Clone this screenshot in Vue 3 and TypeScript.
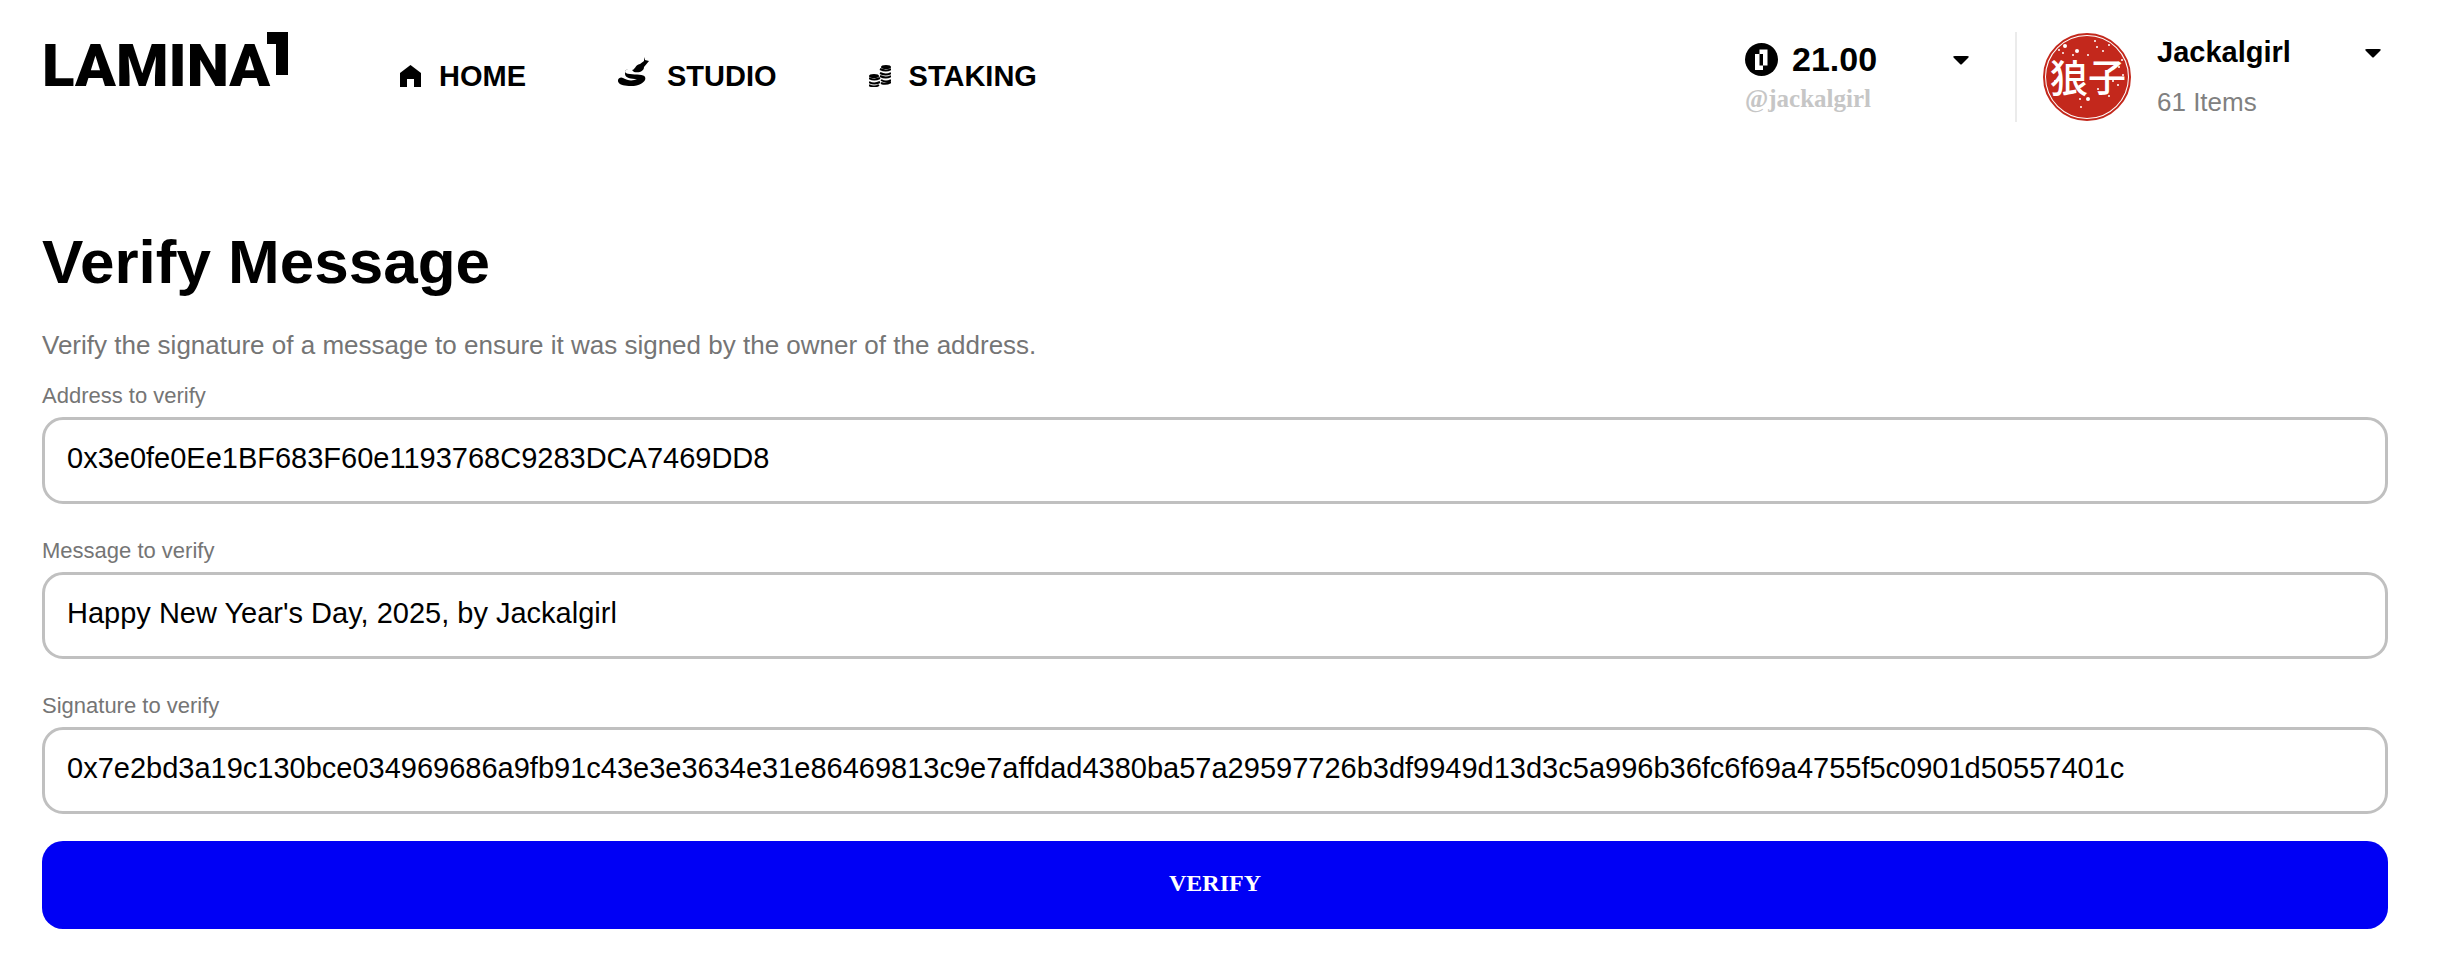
<script setup lang="ts">
import { ref } from 'vue'

interface Field {
  id: string
  label: string
  value: string
}

const fields = ref<Field[]>([
  { id: 'address', label: 'Address to verify', value: '0x3e0fe0Ee1BF683F60e1193768C9283DCA7469DD8' },
  { id: 'message', label: 'Message to verify', value: "Happy New Year's Day, 2025, by Jackalgirl" },
  {
    id: 'signature',
    label: 'Signature to verify',
    value:
      '0x7e2bd3a19c130bce034969686a9fb91c43e3e3634e31e86469813c9e7affdad4380ba57a29597726b3df9949d13d3c5a996b36fc6f69a4755f5c0901d50557401c',
  },
])

// Ink flecks of the seal: x, y, radius
const flecks: [number, number, number][] = [
  [16, 17, 1], [22, 13, 2], [30, 22, 1], [34, 18, 2], [45, 22, 1], [52, 8, 1], [54, 14, 1], [60, 18, 1],
  [66, 12, 1], [79, 27, 1], [76, 34, 1], [20, 20, 1], [12, 48, 1], [59, 46, 1], [37, 66, 1],
  [45, 66, 2], [55, 56, 1], [66, 63, 1], [75, 52, 1], [80, 42, 1], [38, 74, 1], [70, 48, 1],
]
</script>

<template>
  <div class="page">
    <header class="bar">
      <a class="logo" href="#" aria-label="Lamina1">
        <span class="word">LAMINA</span>
        <svg class="one" viewBox="0 0 21 43" aria-hidden="true"><path d="M0 0h21v43H9V12H0z" /></svg>
      </a>
      <nav class="nav">
        <a href="#">
          <svg width="21" height="22" viewBox="0 0 21 22" aria-hidden="true">
            <path d="M10.500 0 21 8v14h-7v-8H7v8H0V8z" />
          </svg>
          HOME
        </a>
        <a href="#">
          <svg class="brush" width="31" height="30" viewBox="0 0 31 30" aria-hidden="true">
            <path d="M26 0l1 3 4 1-5 6c0 4-4 6-10 5l-2-2c3 0 3-5 8-6l4-3z" />
            <path
              d="M10 12c-4 1-4 5 2 5 6 1 14 0 15 3 2 4-5 9-14 9-6 0-11-1-12-3-3-3 1-7 4-5 5 3 10 3 14 1-6 0-12-1-12-5 0-3 1-5 3-5z"
            />
          </svg>
          STUDIO
        </a>
        <a href="#">
          <svg width="22" height="22" viewBox="0 0 22 22" aria-hidden="true">
            <ellipse cx="5" cy="11" rx="5" ry="2" />
            <ellipse cx="17" cy="2" rx="5" ry="2" />
            <g fill="none" stroke="currentColor" stroke-width="2">
              <path d="M0 13q5 3 11 0M0 17q5 3 11 0M0 20q5 3 10 0" />
              <path d="M11 4q6 3 11 0M11 8q6 3 11 0M11 11q6 3 11 0M12 15q5 3 10 0M12 18q5 2 10-1" />
            </g>
          </svg>
          STAKING
        </a>
      </nav>

      <button class="wallet" type="button">
        <span class="funds">
          <span class="balance">
            <svg width="33" height="33" viewBox="0 0 66 66" aria-hidden="true">
              <circle cx="33" cy="33" r="33" />
              <path d="M20 22h16v32H20zM29 13h16v32H29z" fill="#fff" />
              <path d="M29 22h7v23h-7z" />
            </svg>
            21.00
          </span>
          <span class="handle">@jackalgirl</span>
        </span>
        <svg class="caret" viewBox="0 0 16 9" aria-hidden="true">
          <path d="M2 0h12q3 0 1 2L9 8q-1 1-2 0L1 2Q-1 0 2 0z" />
        </svg>
      </button>

      <button class="profile" type="button">
        <svg class="seal" viewBox="0 0 88 88" aria-hidden="true">
          <circle cx="44" cy="44" r="43" fill="none" stroke="#c3281c" stroke-width="2" />
          <circle cx="44" cy="44" r="41" fill="#c3281c" />
          <text x="7" y="59">狼</text>
          <text x="45" y="58">子</text>
          <circle v-for="([x, y, r], i) in flecks" :key="i" :cx="x" :cy="y" :r="r" fill="#fff" />
        </svg>
        <span class="who">
          <strong>Jackalgirl</strong>
          <span class="items">61 Items</span>
        </span>
        <svg class="caret" viewBox="0 0 16 9" aria-hidden="true">
          <path d="M2 0h12q3 0 1 2L9 8q-1 1-2 0L1 2Q-1 0 2 0z" />
        </svg>
      </button>
    </header>

    <main>
      <h1>Verify Message</h1>
      <p class="intro">Verify the signature of a message to ensure it was signed by the owner of the address.</p>
      <form @submit.prevent>
        <div v-for="field in fields" :key="field.id" class="field">
          <label :for="field.id">{{ field.label }}</label>
          <input :id="field.id" v-model="field.value" type="text" autocomplete="off" spellcheck="false" />
        </div>
        <button class="verify" type="submit">VERIFY</button>
      </form>
    </main>
  </div>
</template>

<style>
body {
  background: #fff;
}
</style>

<style scoped>
.page,
.page * {
  box-sizing: border-box;
}

.page {
  padding: 32px 62px 35px 42px;
  color: #000;
  font: 29px/40px 'Liberation Sans', Arial, sans-serif;
}

svg {
  display: block;
  flex: none;
  fill: currentColor;
}

a {
  color: inherit;
  text-decoration: none;
}

button {
  padding: 0;
  border: 0;
  background: none;
  color: inherit;
  font: inherit;
  text-align: left;
  cursor: pointer;
}

.bar {
  display: flex;
  align-items: flex-start;
  padding-right: 7px;
}

/* The numeral shares the wordmark's cell and hangs over its last letter */
.logo {
  display: grid;
  grid-template-areas: 'mark';
  width: 246px;
  font: 900 60px/68px Roboto, sans-serif;
}

.word,
.one {
  grid-area: mark;
}

.one {
  justify-self: end;
  width: 21px;
  height: 43px;
}

.nav {
  display: flex;
  gap: 92px;
  margin: 24px auto 0 112px;
  font-weight: 700;
}

.nav a {
  display: flex;
  align-items: center;
  gap: 18px;
}

.brush {
  margin-bottom: 8px;
}

.wallet {
  display: flex;
  align-items: flex-start;
  justify-content: space-between;
  width: 272px;
  height: 90px;
  padding: 7px 46px 0 0;
  border-right: 2px solid #ebebeb;
}

.funds,
.who {
  display: flex;
  flex-direction: column;
}

.balance {
  display: flex;
  align-items: center;
  gap: 14px;
  font-weight: 700;
  font-size: 34px;
}

.handle {
  color: #c6c6c6;
  font: 700 25px/40px 'Liberation Serif', serif;
}

.caret {
  width: 16px;
  height: 9px;
  margin-top: 17px;
}

.profile {
  display: flex;
  align-items: flex-start;
  width: 364px;
  padding-left: 26px;
}

.seal {
  width: 88px;
  height: 88px;
  margin-top: 1px;
}

.seal text {
  fill: #fff;
  font: 500 38px 'Noto Sans CJK JP', sans-serif;
}

.who {
  flex: 1;
  gap: 10px;
  padding-left: 26px;
}

.items {
  color: #808080;
  font-size: 26px;
}

h1 {
  margin: 105px 0 0;
  font-size: 62px;
  line-height: 70px;
}

.intro {
  margin: 28px 0 17px;
  color: #757575;
  font-size: 26px;
}

.field {
  display: flex;
  flex-direction: column;
  gap: 7px;
  margin-bottom: 33px;
}

label {
  color: #757575;
  font-size: 22px;
  line-height: 28px;
}

input {
  width: 100%;
  height: 87px;
  padding: 0 22px 4px;
  border: 3px solid #c0c0c0;
  border-radius: 21px;
  background: #fff;
  color: #000;
  font: inherit;
}

.field:nth-last-child(2) {
  margin-bottom: 27px;
}

.verify {
  width: 100%;
  height: 88px;
  padding-bottom: 4px;
  border-radius: 21px;
  background: #0000f5;
  color: #fff;
  font: 700 24px/40px 'Liberation Serif', serif;
  text-align: center;
}
</style>
